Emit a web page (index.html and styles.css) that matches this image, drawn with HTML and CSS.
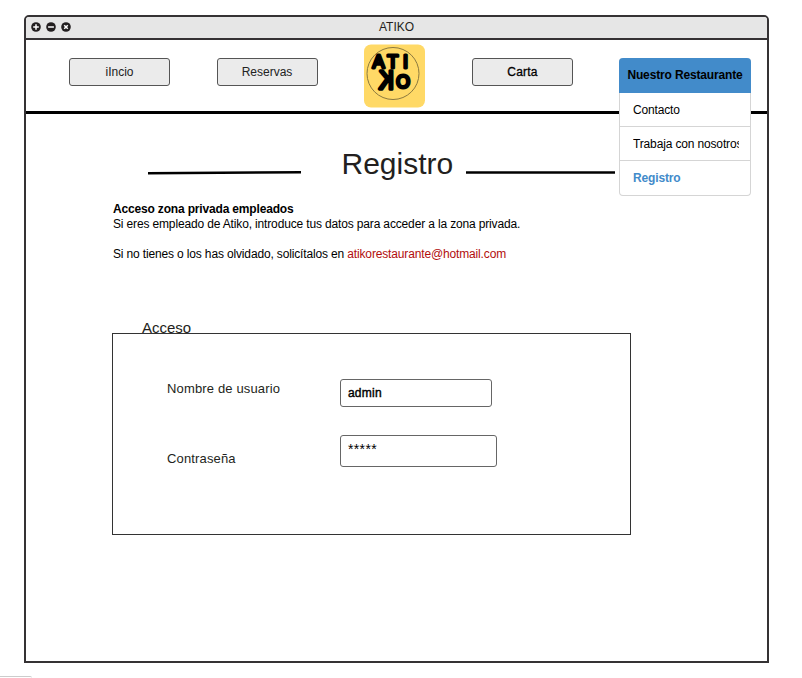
FILE: index.html
```html
<!DOCTYPE html>
<html lang="es">
<head>
<meta charset="utf-8">
<title>ATIKO</title>
<link rel="stylesheet" href="styles.css">
</head>
<body>
<main class="window">
  <div class="titlebar">
    <svg class="controls" width="42" height="12" viewBox="0 0 42 12">
      <g fill="#231f20"><circle cx="6" cy="6" r="4.8"/><circle cx="21" cy="6" r="4.8"/><circle cx="36" cy="6" r="4.8"/></g>
      <path d="M3.2 6h5.6M6 3.2v5.6M18.1 6h5.8M34.2 4.2l3.6 3.6M37.8 4.2l-3.6 3.6" stroke="#fff" stroke-width="1.5"/>
    </svg>
    <span class="window-title">ATIKO</span>
  </div>
  <header class="header">
    <a class="nav-button inicio">iIncio</a>
    <a class="nav-button reservas">Reservas</a>
    <svg class="logo" width="61" height="64" viewBox="0 0 61 64">
      <rect y=".5" width="61" height="63" rx="7" fill="#ffd966"/>
      <circle cx="29" cy="29.5" r="26" fill="none" stroke="#8b793f" stroke-width="1"/>
      <g class="logo-letters">
        <text x="8.6" y="24">A</text>
        <text x="23.2" y="24">T</text>
        <text x="39" y="24">I</text>
        <text class="logo-k" transform="translate(29.8 45.3) scale(-.85 1)">K</text>
        <text class="logo-o" x="32.3" y="43.5">O</text>
      </g>
    </svg>
    <a class="nav-button carta">Carta</a>
    <nav class="menu">
      <div class="menu-head">Nuestro Restaurante</div>
      <div class="menu-item"><span>Contacto</span></div>
      <div class="menu-item"><span>Trabaja con nosotros</span></div>
      <div class="menu-item active"><span>Registro</span></div>
    </nav>
  </header>
  <section class="content">
    <div class="heading">
      <svg class="rule-left" width="153" height="5" viewBox="0 0 153 5"><path d="M0 3.2L153 2.2" stroke="#000" stroke-width="2.4"/></svg>
      <h1>Registro</h1>
      <svg class="rule-right" width="149" height="5" viewBox="0 0 149 5"><path d="M0 2.5H149" stroke="#000" stroke-width="2.4"/></svg>
    </div>
    <div class="intro">
      <b>Acceso zona privada empleados</b>
      <p>Si eres empleado de Atiko, introduce tus datos para acceder a la zona privada.</p>
      <p class="help">Si no tienes o los has olvidado, solicítalos en <span class="mail">atikorestaurante@hotmail.com</span></p>
    </div>
    <div class="legend">Acceso</div>
    <form class="login">
      <span class="label user">Nombre de usuario</span>
      <div class="field user-field">admin</div>
      <span class="label pass">Contraseña</span>
      <div class="field pass-field">*****</div>
    </form>
  </section>
</main>
<div class="tab-edge"></div>
</body>
</html>
```
FILE: styles.css
```css
* { box-sizing: border-box; }
body { margin: 0; height: 678px; overflow: hidden; background: #fff; font: 12px/15px "Liberation Sans", Arial, sans-serif; color: #000; }
.window { width: 745px; height: 648px; margin: 15px 0 0 24px; border: 2px solid #353234; border-radius: 5px 5px 0 0; }
.titlebar { display: grid; grid-template-columns: 48px 1fr 48px; height: 23px; background: #e6e6e6; border-bottom: 2px solid #353234; border-radius: 3px 3px 0 0; }
.controls { margin: 4px 0 0 4px; }
.window-title { text-align: center; padding-top: 3px; color: #231f20; }
.header { display: flex; align-items: flex-start; height: 74px; border-bottom: 3px solid #000; padding-left: 43px; }
.nav-button { flex: none; width: 101px; height: 28px; margin-top: 18px; border: 1px solid #555; border-radius: 3px; background: #ebebeb; text-align: center; line-height: 27px; color: #222; }
.reservas { margin-left: 46.5px; }
.logo { flex: none; margin: 4px 0 0 46.5px; }
.logo-letters { font: 18px "Liberation Sans", sans-serif; stroke: #000; stroke-width: 2.9; stroke-linejoin: round; }
.logo-k { font-size: 26px; stroke-width: 3.6; }
.logo-o { font-size: 17.5px; stroke-width: 3; }
.carta { margin-left: 47px; color: #000; -webkit-text-stroke: .3px #000; letter-spacing: .2px; }
.menu { flex: none; position: relative; width: 132px; height: 138px; margin: 18px 0 0 46px; background: #fff; border: 1px solid #d5d5d5; border-top: 0; border-radius: 4px; letter-spacing: -.15px; }
.menu-head { height: 35px; margin: 0 -1px; background: #428bca; border-radius: 4px 4px 0 0; text-align: center; line-height: 34px; font-weight: bold; }
.menu-item { height: 34px; border-bottom: 1px solid #d5d5d5; line-height: 34px; padding: 0 11px 0 13px; }
.menu-item span { display: block; overflow: hidden; white-space: nowrap; }
.menu-item.active { border: 0; color: #428bca; font-weight: bold; }
.content { padding-left: 87px; }
.heading { display: flex; align-items: flex-start; padding: 31px 0 0 35px; height: 88px; }
.heading h1 { margin: 0 0 0 40.5px; width: 111.5px; font-size: 30px; line-height: 37px; font-weight: normal; color: #231f20; white-space: nowrap; }
.heading svg { flex: none; margin-top: 25px; }
.heading .rule-right { margin-left: 13px; }
.intro { height: 118px; letter-spacing: -.15px; }
.intro b { display: block; letter-spacing: -.17px; }
.intro p { margin: 0; }
.intro .help { margin-top: 15px; }
.mail { color: #b20d0d; }
.legend { height: 13px; margin-left: 29px; font-size: 15px; line-height: 16px; color: #231f20; }
.login { display: grid; grid-template-columns: 173.4px 157px; grid-template-rows: 56px 32px; align-items: start; width: 519px; height: 202px; margin-left: -1px; padding: 45px 0 0 54px; border: 1px solid #333; }
.label { font-size: 13px; line-height: 18px; color: #231f20; letter-spacing: .15px; }
.user { padding-top: 1px; }
.pass { padding-top: 15px; }
.field { border: 1px solid #666; border-radius: 3px; padding-left: 6.5px; }
.user-field { width: 151.5px; height: 28px; line-height: 27px; letter-spacing: .25px; -webkit-text-stroke: .4px #000; }
.pass-field { width: 156.5px; height: 32px; font-size: 14px; line-height: 27px; letter-spacing: .4px; }
.tab-edge { width: 32px; height: 2px; margin-top: 13px; border-top: 1px solid #ccc; border-radius: 0 3px 0 0; }
```
